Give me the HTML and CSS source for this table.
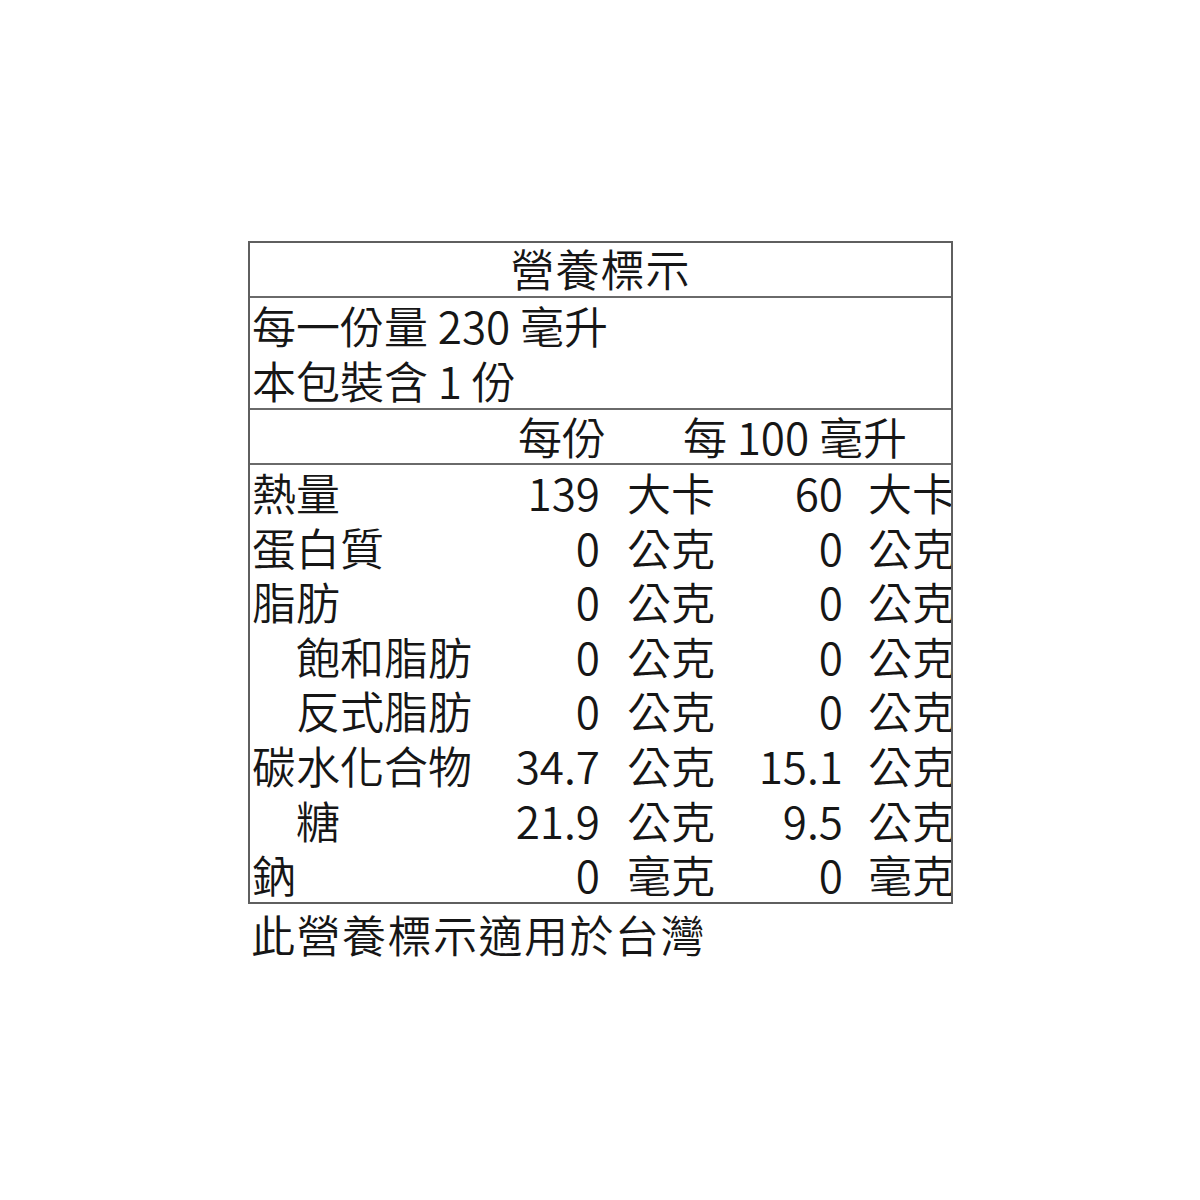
FILE: index.html
```html
<!DOCTYPE html>
<html lang="zh-Hant">
<head>
<meta charset="utf-8">
<title>營養標示</title>
<link rel="stylesheet" href="styles.css">
</head>
<body>
<div class="page">
  <div class="label">
    <div class="title">營養標示</div>
    <div class="serving">
      <div class="line">每一份量 230 毫升</div>
      <div class="line">本包裝含 1 份</div>
    </div>
    <div class="head grid">
      <div class="h1">每份</div>
      <div class="h2">每 100 毫升</div>
    </div>
    <div class="rows">
      <div class="grid row"><div class="name">熱量</div><div class="val">139</div><div class="unit">大卡</div><div class="val">60</div><div class="unit">大卡</div></div>
      <div class="grid row"><div class="name">蛋白質</div><div class="val">0</div><div class="unit">公克</div><div class="val">0</div><div class="unit">公克</div></div>
      <div class="grid row"><div class="name">脂肪</div><div class="val">0</div><div class="unit">公克</div><div class="val">0</div><div class="unit">公克</div></div>
      <div class="grid row"><div class="name sub">飽和脂肪</div><div class="val">0</div><div class="unit">公克</div><div class="val">0</div><div class="unit">公克</div></div>
      <div class="grid row"><div class="name sub">反式脂肪</div><div class="val">0</div><div class="unit">公克</div><div class="val">0</div><div class="unit">公克</div></div>
      <div class="grid row"><div class="name">碳水化合物</div><div class="val">34.7</div><div class="unit">公克</div><div class="val">15.1</div><div class="unit">公克</div></div>
      <div class="grid row"><div class="name sub">糖</div><div class="val">21.9</div><div class="unit">公克</div><div class="val">9.5</div><div class="unit">公克</div></div>
      <div class="grid row"><div class="name">鈉</div><div class="val">0</div><div class="unit">毫克</div><div class="val">0</div><div class="unit">毫克</div></div>
    </div>
  </div>
  <div class="footer">此營養標示適用於台灣</div>
</div>
</body>
</html>
```
FILE: styles.css
```css
html, body {
  margin: 0;
  padding: 0;
  background: #ffffff;
}

body {
  width: 1200px;
  height: 1200px;
  font-family: "Noto Sans CJK TC", "Noto Sans CJK SC", "Noto Sans", sans-serif;
  font-weight: 350;
  color: #161616;
  font-size: 44px;
}

.page {
  padding-top: 241px;
  padding-left: 248px;
}

.label {
  width: 705px;
  box-sizing: border-box;
  border: 2px solid #5f5f5f;
  overflow-x: clip;
  overflow-y: visible;
}

.title {
  height: 53px;
  line-height: 51px;
  text-align: center;
  letter-spacing: 1px;
  border-bottom: 2px solid #6a6a6a;
}

.serving {
  border-bottom: 2px solid #6a6a6a;
  padding-left: 2px;
}

.serving .line {
  height: 55px;
  line-height: 55px;
  white-space: nowrap;
}

.grid {
  display: grid;
  grid-template-columns: 220px 130px 110px 133px 108px;
  white-space: nowrap;
}

.head {
  height: 53px;
  line-height: 53px;
  border-bottom: 2px solid #6a6a6a;
}

.head .h1 {
  grid-column: 2 / 3;
  justify-self: end;
  margin-right: -6px;
}

.head .h2 {
  grid-column: 3 / 6;
  justify-self: end;
  margin-right: 44px;
}

.row {
  height: 54.6px;
  line-height: 54.6px;
}

.name {
  padding-left: 2px;
}

.name.sub {
  padding-left: 46px;
}

.val {
  text-align: right;
}

.unit {
  padding-left: 27px;
}

.row .unit:last-child {
  padding-left: 25px;
}

.footer {
  padding-left: 3px;
  margin-top: 2px;
  line-height: 56px;
  letter-spacing: 1.5px;
}
```
